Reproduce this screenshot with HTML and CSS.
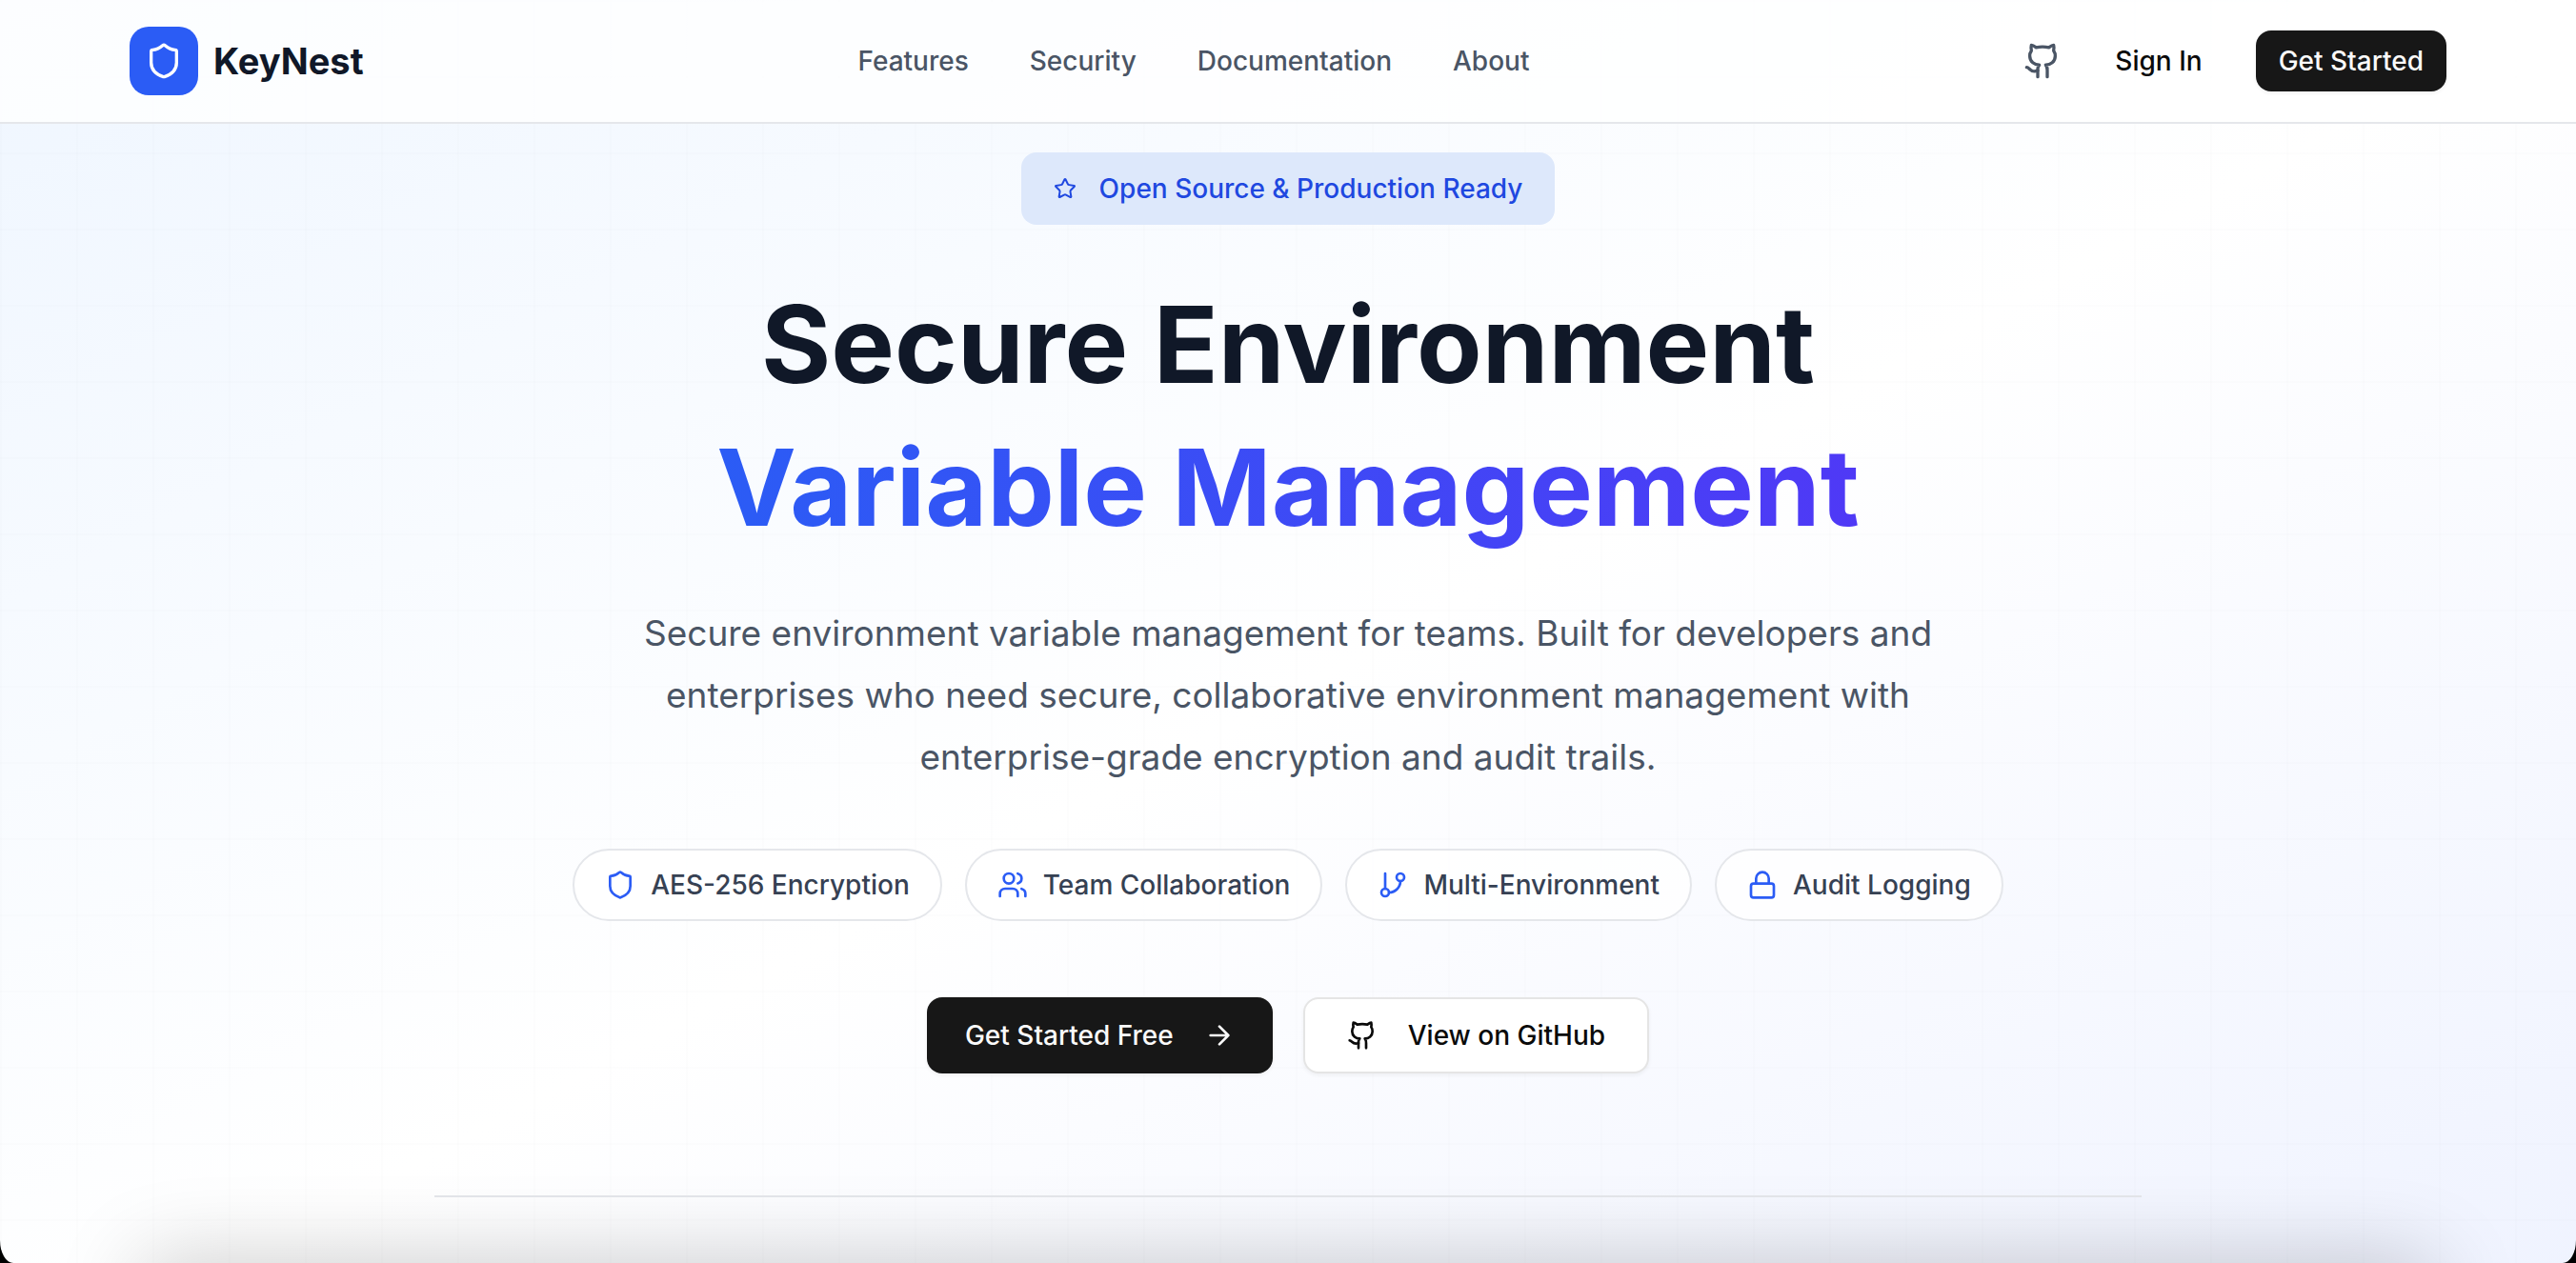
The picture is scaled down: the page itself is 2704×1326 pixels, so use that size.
FILE: index.html
```html
<!DOCTYPE html>
<html lang="en">
<head>
<meta charset="utf-8">
<meta name="viewport" content="width=device-width, initial-scale=1">
<title>KeyNest</title>
<link rel="stylesheet" href="styles.css">
</head>
<body>
<svg class="sprite" aria-hidden="true">
  <symbol id="shield" viewBox="0 0 24 24"><path d="M20 13c0 5-3.500 7.500-7.660 8.950a1 1 0 0 1-.67-.01C7.500 20.500 4 18 4 13V6a1 1 0 0 1 1-1c2 0 4.500-1.200 6.240-2.720a1.170 1.170 0 0 1 1.520 0C14.510 3.810 17 5 19 5a1 1 0 0 1 1 1z"/></symbol>
  <symbol id="github" viewBox="0 0 24 24"><path d="M15 22v-4a4.800 4.800 0 0 0-1-3.500c3 0 6-2 6-5.500.08-1.250-.27-2.480-1-3.500.28-1.150.28-2.350 0-3.500 0 0-1 0-3 1.500-2.640-.5-5.360-.5-8 0C6 2 5 2 5 2c-.3 1.150-.3 2.350 0 3.500A5.403 5.403 0 0 0 4 9c0 3.500 3 5.500 6 5.500-.39.49-.68 1.050-.85 1.650-.17.6-.22 1.230-.15 1.850v4"/><path d="M9 18c-4.510 2-5-2-7-2"/></symbol>
  <symbol id="star" viewBox="0 0 24 24"><path d="M11.525 2.295a.53.53 0 0 1 .95 0l2.310 4.679a2.123 2.123 0 0 0 1.595 1.160l5.166.756a.53.53 0 0 1 .294.904l-3.736 3.638a2.123 2.123 0 0 0-.611 1.878l.882 5.140a.53.53 0 0 1-.771.560l-4.618-2.428a2.122 2.122 0 0 0-1.973 0L6.396 21.010a.53.53 0 0 1-.770-.560l.881-5.139a2.122 2.122 0 0 0-.611-1.879L2.160 9.795a.53.53 0 0 1 .294-.906l5.165-.755a2.122 2.122 0 0 0 1.597-1.160z"/></symbol>
  <symbol id="users" viewBox="0 0 24 24"><path d="M16 21v-2a4 4 0 0 0-4-4H6a4 4 0 0 0-4 4v2"/><circle cx="9" cy="7" r="4"/><path d="M22 21v-2a4 4 0 0 0-3-3.870M16 3.130a4 4 0 0 1 0 7.750"/></symbol>
  <symbol id="branch" viewBox="0 0 24 24"><path d="M6 3v12"/><circle cx="18" cy="6" r="3"/><circle cx="6" cy="18" r="3"/><path d="M18 9a9 9 0 0 1-9 9"/></symbol>
  <symbol id="lock" viewBox="0 0 24 24"><rect width="18" height="11" x="3" y="11" rx="2"/><path d="M7 11V7a5 5 0 0 1 10 0v4"/></symbol>
  <symbol id="arrow" viewBox="0 0 24 24"><path d="M5 12h14M12 5l7 7-7 7"/></symbol>
</svg>
<div class="page">
  <header class="header">
    <div class="header-inner">
      <a class="brand" href="#"><span class="brand-mark"><svg class="icon icon-lg"><use href="#shield"/></svg></span>KeyNest</a>
      <nav class="nav">
        <a href="#features">Features</a>
        <a href="#security">Security</a>
        <a href="#docs">Documentation</a>
        <a href="#about">About</a>
      </nav>
      <div class="actions">
        <a class="github-link" href="#github" aria-label="GitHub"><svg class="icon icon-lg"><use href="#github"/></svg></a>
        <button class="btn btn-ghost" type="button">Sign In</button>
        <button class="btn btn-dark" type="button">Get Started</button>
      </div>
    </div>
  </header>
  <main class="hero">
    <div class="badge"><svg class="icon icon-sm"><use href="#star"/></svg>Open Source &amp; Production Ready</div>
    <h1 class="title">Secure Environment <span class="title-accent">Variable Management</span></h1>
    <p class="lead">Secure environment variable management for teams. Built for developers and enterprises who need secure, collaborative environment management with enterprise-grade encryption and audit trails.</p>
    <ul class="pills">
      <li class="pill"><svg class="icon"><use href="#shield"/></svg>AES-256 Encryption</li>
      <li class="pill"><svg class="icon"><use href="#users"/></svg>Team Collaboration</li>
      <li class="pill"><svg class="icon"><use href="#branch"/></svg>Multi-Environment</li>
      <li class="pill"><svg class="icon"><use href="#lock"/></svg>Audit Logging</li>
    </ul>
    <div class="cta">
      <button class="btn btn-dark btn-lg" type="button">Get Started Free<svg class="icon"><use href="#arrow"/></svg></button>
      <button class="btn btn-outline btn-lg" type="button"><svg class="icon"><use href="#github"/></svg>View on GitHub</button>
    </div>
    <hr class="divider">
  </main>
  <div class="window-shade" aria-hidden="true"></div>
</div>
</body>
</html>
```
FILE: styles.css
```css
* { box-sizing: border-box; margin: 0; }

body {
  background: #000;
  color: #0a0a0a;
  font-family: Inter, "Liberation Sans", sans-serif;
  font-size: 28px;
  line-height: 40px;
}

.sprite { position: absolute; width: 0; height: 0; }

.page {
  position: relative;
  min-height: 100vh;
  overflow: hidden;
  border-radius: 0 0 14px 14px / 0 0 24px 24px;
  background:
    linear-gradient(to right, #00000002 2px, transparent 2px) 0 0 / 80px 80px,
    linear-gradient(to bottom, #00000002 2px, transparent 2px) 0 0 / 80px 80px,
    linear-gradient(to bottom right, #eff6ff, #fff 50%, #eef2ff) 0 0 / 100% 110%;
}

.icon {
  flex: none;
  width: 32px;
  height: 32px;
  fill: none;
  stroke: currentColor;
  stroke-width: 2;
  stroke-linecap: round;
  stroke-linejoin: round;
}
.icon-sm { width: 24px; height: 24px; }
.icon-lg { width: 40px; height: 40px; }

.header {
  background: #ffffffcc;
  border-bottom: 2px solid #e5e7eb;
}
.header-inner {
  display: flex;
  align-items: center;
  justify-content: space-between;
  max-width: 2560px;
  height: 128px;
  margin: 0 auto;
  padding: 0 64px;
}
.brand {
  display: flex;
  align-items: center;
  gap: 16px;
  color: #101828;
  font-size: 38px;
  font-weight: 700;
  text-decoration: none;
}
.brand-mark {
  display: grid;
  place-items: center;
  width: 72px;
  height: 72px;
  border-radius: 20px;
  background: #2b5cf5;
  color: #fff;
}
.nav { display: flex; gap: 64px; }
.nav a {
  color: #4a5565;
  font-weight: 450;
  text-decoration: none;
}
.actions {
  display: flex;
  align-items: center;
  gap: 32px;
}
.github-link { display: flex; color: #4a5565; }

.btn {
  display: inline-flex;
  align-items: center;
  justify-content: center;
  gap: 32px;
  height: 64px;
  padding: 0 24px;
  border: 0;
  border-radius: 16px;
  font: inherit;
  font-weight: 450;
}
.btn-ghost { background: transparent; color: #0a0a0a; }
.btn-dark { background: #171717; color: #fafafa; box-shadow: 0 2px 4px #0000000d; }
.btn-outline {
  background: #fff;
  border: 2px solid #e5e5e5;
  color: #0a0a0a;
  box-shadow: 0 2px 4px #0000000d;
}
.btn-lg { height: 80px; padding: 0 40px; }
.btn-outline.btn-lg { padding: 0 44px; }

.hero {
  display: flex;
  flex-direction: column;
  align-items: center;
  max-width: 1792px;
  margin: 0 auto;
  padding-top: 30px;
  text-align: center;
}
.badge {
  display: flex;
  align-items: center;
  gap: 24px;
  height: 76px;
  padding: 0 34px;
  border-radius: 16px;
  background: #dde8fb;
  color: #1f48e0;
  font-weight: 450;
}
.title {
  margin-top: 50px;
  color: #101828;
  font-size: 112px;
  font-weight: 700;
  line-height: 150px;
}
.title-accent {
  display: table;
  margin: 0 auto;
  background: linear-gradient(to right, #2b5cf5, #4f39f6);
  background-clip: text;
  color: transparent;
}
.lead {
  max-width: 1400px;
  margin-top: 46px;
  color: #4a5565;
  font-size: 37px;
  line-height: 65px;
}
.pills {
  display: flex;
  gap: 24px;
  margin-top: 64px;
  padding: 0;
  list-style: none;
}
.pill {
  display: flex;
  align-items: center;
  gap: 16px;
  height: 76px;
  padding: 0 32px;
  border: 2px solid #e5e7eb;
  border-radius: 38px;
  background: #ffffffcc;
  color: #364153;
  font-weight: 450;
}
.pill .icon { color: #2b5cf5; }
.cta { display: flex; gap: 32px; margin-top: 80px; }
.divider {
  width: 100%;
  margin-top: 128px;
  border: 0;
  border-top: 2px solid #e5e7eb;
}

/* Soft shade that rises from the lower window edge */
.window-shade {
  position: absolute;
  right: 150px;
  bottom: -80px;
  left: 150px;
  height: 80px;
  box-shadow: 0 0 90px #00000038;
}
```
